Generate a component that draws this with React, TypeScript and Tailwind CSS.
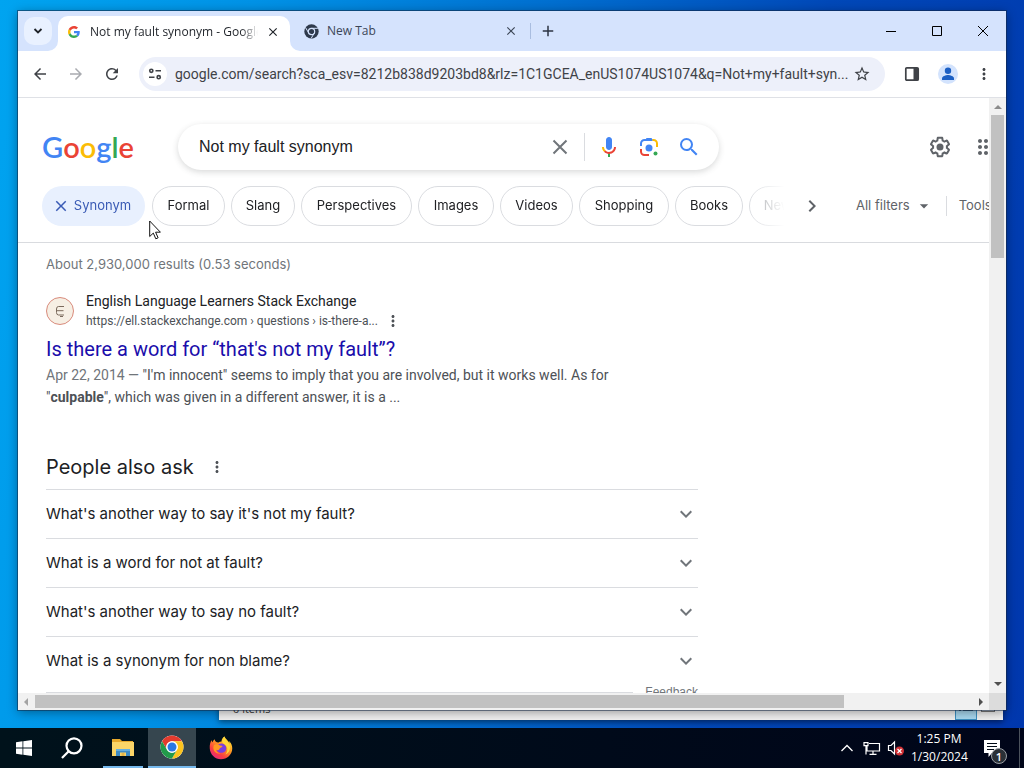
import React from "react";
import {
  MdArrowBack,
  MdArrowForward,
  MdRefresh,
  MdStarBorder,
  MdMoreVert,
  MdSearch,
  MdClose,
  MdAdd,
  MdKeyboardArrowDown,
  MdChevronRight,
  MdArrowDropDown,
} from "react-icons/md";

const chips = [
  { label: "Formal", width: "w-[73px]" },
  { label: "Slang", width: "w-16" },
  { label: "Perspectives", width: "w-[111px]" },
  { label: "Images", width: "w-[76px]" },
  { label: "Videos", width: "w-[73px]" },
  { label: "Shopping", width: "w-[90px]" },
  { label: "Books", width: "w-[68px]" },
];

const questions = [
  "What's another way to say it's not my fault?",
  "What is a word for not at fault?",
  "What's another way to say no fault?",
  "What is a synonym for non blame?",
];

function GoogleG() {
  return (
    <svg viewBox="0 0 48 48" className="size-3 shrink-0" aria-hidden="true">
      <path fill="#EA4335" d="M24 9.5c3.54 0 6.71 1.22 9.21 3.6l6.85-6.85C35.9 2.38 30.47 0 24 0 14.62 0 6.51 5.38 2.56 13.22l7.98 6.19C12.43 13.72 17.74 9.5 24 9.5z" />
      <path fill="#4285F4" d="M46.98 24.55c0-1.57-.15-3.09-.38-4.55H24v9.02h12.94c-.58 2.96-2.26 5.48-4.78 7.18l7.73 6c4.51-4.18 7.09-10.36 7.09-17.65z" />
      <path fill="#FBBC05" d="M10.53 28.59c-.48-1.45-.76-2.99-.76-4.59s.27-3.14.76-4.59l-7.98-6.19C.92 16.46 0 20.12 0 24s.92 7.54 2.56 10.78l7.97-6.19z" />
      <path fill="#34A853" d="M24 48c6.48 0 11.93-2.13 15.89-5.81l-7.73-6c-2.15 1.45-4.92 2.3-8.16 2.3-6.26 0-11.57-4.22-13.47-9.91l-7.98 6.19C6.51 42.62 14.62 48 24 48z" />
    </svg>
  );
}

function ChromeMono() {
  return (
    <svg viewBox="0 0 24 24" className="size-[15px] shrink-0" aria-hidden="true">
      <circle cx="12" cy="12" r="11.5" fill="#2f3a4c" />
      <circle cx="12" cy="12" r="5.1" fill="#2f3a4c" stroke="#d5e3fd" strokeWidth="1.9" />
      <path d="M12 6.9h10.2M7.6 14.5 2.5 5.8M16.4 14.5 11.3 23.3" stroke="#d5e3fd" strokeWidth="1.6" fill="none" />
    </svg>
  );
}

function ChromeColor() {
  return (
    <svg viewBox="0 0 48 48" className="size-6" aria-hidden="true">
      <circle cx="24" cy="24" r="23" fill="#fff" />
      <path fill="#e33b2e" d="M4.1 12.5A23 23 0 0 1 43.9 12.5H24A11.5 11.5 0 0 0 14 29.7z" />
      <path fill="#fcc31e" d="M43.9 12.5A23 23 0 0 1 24 47L34 29.7A11.5 11.5 0 0 0 24 12.5z" />
      <path fill="#229a4a" d="M24 47A23 23 0 0 1 4.1 12.5L14 29.7A11.5 11.5 0 0 0 34 29.7z" />
      <circle cx="24" cy="24" r="11.5" fill="#fff" />
      <circle cx="24" cy="24" r="9" fill="#2a78e4" />
    </svg>
  );
}

function Firefox() {
  return (
    <svg viewBox="0 0 48 48" className="size-6" aria-hidden="true">
      <defs>
        <linearGradient id="fox" x1="0.85" y1="0.05" x2="0.2" y2="0.95">
          <stop offset="0" stopColor="#ffe63b" />
          <stop offset="0.4" stopColor="#ff9a22" />
          <stop offset="0.75" stopColor="#fb3d43" />
          <stop offset="1" stopColor="#e42a7c" />
        </linearGradient>
      </defs>
      <path fill="url(#fox)" d="M45 17c-1.500-3.500-4-6-5.500-7 .8 1.600 1.300 3.500 1.400 4.800C38 8 32.500 6 31 1c-4 2-6 6-6 10-2.500.2-4.500 1-6 2-2 .2-4-.5-5-1.500-1.500-1-2.500-3-2.500-5C9 8 7.500 10.500 7 12.500 5.800 12 5.300 9.500 5.400 8 3 11.500 1 17 1.500 24.500 2 37 12 46.500 24 46.500S46.500 37 46.500 25c0-3-.4-5.500-1.500-8z" />
      <path fill="#7a3fe0" d="M16 20c3-5 10-7 15-3 4.500 3.500 5 10 1 14-5 4.500-13 3-16-2-2-3-1.500-6 0-9z" />
      <path fill="#ff9a22" d="M10 18c4-2 8-1.500 11 .5 2 1 4.500 1 6 1.500-.5 2-2.500 3-4.500 4-2 1-1.500 4-4 4.500-2 .5-3-.5-4-1 0 4 4 7 9 7-7 2-13-2-14.500-8-.6-3 0-6 1-8.500z" />
      <path fill="#ffd83a" d="M31 1c1 7 10 10 11 20 .8 8-4 14-9 16 4-5 5-11 2-16-2-4-6-5-8-8-1-4 0-9 4-12z" />
    </svg>
  );
}

function Explorer() {
  return (
    <svg viewBox="0 0 24 24" className="size-6" aria-hidden="true">
      <path d="M1 4h8l2 2h11v15H1z" fill="#e8a92c" />
      <path d="M1 7h22v14H1z" fill="#fbd568" />
      <path d="M5 14h14v7h-4v-3.500H9V21H5z" fill="#3f8cc4" />
      <path d="M5 14h14v2H5z" fill="#65afe0" />
      <path d="M10.500 18h3v3h-3z" fill="#e6b64a" />
    </svg>
  );
}

function Mic() {
  return (
    <svg viewBox="0 0 24 24" className="size-6" aria-hidden="true">
      <path fill="#4285f4" d="m12 15c1.660 0 3-1.310 3-2.970v-7.020c0-1.660-1.340-3.010-3-3.010s-3 1.340-3 3.010v7.020c0 1.660 1.340 2.970 3 2.970z" />
      <path fill="#34a853" d="m11 18.080h2v3.920h-2z" />
      <path fill="#fbbc04" d="m7.050 16.870c-1.270-1.330-2.050-2.830-2.050-4.870h2c0 1.450 0.560 2.420 1.470 3.380v0.320l-1.150 1.180z" />
      <path fill="#ea4335" d="m12 16.930a4.970 5.250 0 0 1 -3.540 -1.550l-1.410 1.490c1.260 1.340 3.020 2.130 4.950 2.130 3.870 0 6.990-2.920 6.990-7h-1.990c0 2.920-2.240 4.930-5 4.930z" />
    </svg>
  );
}

function Lens() {
  return (
    <svg viewBox="0 0 24 24" className="size-6" fill="none" aria-hidden="true">
      <path d="M4 11V8.500A3.500 3.500 0 0 1 7.500 5h8" stroke="#4285f4" strokeWidth="2" />
      <path d="M8 5.500 9.500 3h5L16 5.500z" fill="#4285f4" />
      <path d="M15.500 5h1A3.500 3.500 0 0 1 20 8.500V12" stroke="#fbbc04" strokeWidth="2" />
      <path d="M4 14v2.500A3.500 3.500 0 0 0 7.500 20H12" stroke="#ea4335" strokeWidth="2" />
      <circle cx="12" cy="13" r="3.500" fill="#4285f4" />
      <circle cx="18.500" cy="18.500" r="2" fill="#34a853" />
    </svg>
  );
}

function Gear() {
  return (
    <svg viewBox="0 0 24 24" className="size-6" fill="#5f6368" aria-hidden="true">
      <path d="M13.850 22.250h-3.700c-.740 0-1.360-.540-1.450-1.270l-.270-1.890c-.270-.140-.530-.290-.790-.460l-1.800.720c-.700.260-1.470-.030-1.810-.650L2.200 15.530c-.350-.660-.200-1.440.360-1.880l1.530-1.190c-.010-.150-.020-.300-.020-.460 0-.150.010-.310.020-.460l-1.520-1.190c-.590-.450-.740-1.260-.370-1.880l1.850-3.190c.340-.620 1.110-.900 1.790-.630l1.810.730c.260-.170.520-.320.780-.460l.270-1.910c.090-.700.710-1.250 1.440-1.250h3.700c.740 0 1.360.540 1.450 1.270l.270 1.890c.270.140.530.290.790.460l1.800-.720c.710-.260 1.480.030 1.820.650l1.840 3.180c.360.660.200 1.440-.360 1.880l-1.520 1.190c.010.150.020.300.020.460s-.010.310-.020.460l1.520 1.190c.560.450.720 1.230.370 1.860l-1.860 3.220c-.340.620-1.110.900-1.800.630l-1.800-.720c-.260.170-.520.320-.780.460l-.270 1.910c-.100.680-.720 1.220-1.460 1.220zm-3.230-2h2.760l.370-2.550.530-.220c.440-.180.880-.440 1.340-.780l.450-.340 2.380.960 1.380-2.400-2.030-1.580.070-.560c.030-.260.060-.510.060-.780s-.030-.530-.060-.780l-.070-.560 2.030-1.580-1.390-2.400-2.390.960-.450-.350c-.420-.320-.870-.580-1.330-.770l-.520-.220-.370-2.550h-2.760l-.370 2.550-.530.210c-.440.190-.880.440-1.340.790l-.450.330-2.380-.950-1.390 2.390 2.030 1.580-.070.560a7 7 0 0 0-.060.790c0 .260.020.530.060.780l.070.560-2.030 1.580 1.380 2.400 2.390-.960.450.350c.430.330.860.580 1.330.770l.530.220.380 2.550z" />
      <circle cx="12" cy="12" r="3.500" />
    </svg>
  );
}

function TabStrip() {
  return (
    <div className="flex h-10 shrink-0 bg-[#d5e3fd] text-xs text-[#1f2329]">
      <button aria-label="Search tabs" className="mt-1.5 ml-1.5 flex size-7 items-center justify-center rounded-[10px] bg-[#e9f1ff]">
        <svg viewBox="0 0 10 10" className="size-2.5" fill="none" stroke="#1f2329" strokeWidth="1.800" aria-hidden="true">
          <path d="M1.500 3 5 6.500 8.500 3" />
        </svg>
      </button>
      <div className="relative mt-[5px] ml-1.5 flex w-[232px] items-center rounded-t-[10px] bg-white pr-2 pb-1 pl-2.5">
        <svg viewBox="0 0 10 10" className="absolute bottom-0 -left-2.5 size-2.5" fill="#fff" aria-hidden="true">
          <path d="M10 0v10H0A10 10 0 0 0 10 0z" />
        </svg>
        <svg viewBox="0 0 10 10" className="absolute -right-2.5 bottom-0 size-2.5" fill="#fff" aria-hidden="true">
          <path d="M0 0v10h10A10 10 0 0 1 0 0z" />
        </svg>
        <GoogleG />
        <span className="ml-2.5 w-[168px] overflow-hidden mask-r-from-90% whitespace-nowrap">Not my fault synonym - Google Search</span>
        <button aria-label="Close tab" className="ml-2 text-sm"><MdClose /></button>
      </div>
      <div className="flex w-[238px] items-center pl-3.5 text-[#3c4657]">
        <ChromeMono />
        <span className="ml-2 flex-1">New Tab</span>
        <button aria-label="Close tab" className="mr-2.5 text-sm"><MdClose /></button>
      </div>
      <div className="my-3 ml-0.5 w-px bg-[#a9bde0]" />
      <button aria-label="New tab" className="ml-2 text-lg text-[#2c3543]"><MdAdd /></button>
      <div className="ml-auto flex">
        <button aria-label="Minimize" className="flex w-[46px] items-center justify-center">
          <svg viewBox="0 0 10 10" className="size-2.5" stroke="#000" aria-hidden="true"><path d="M0 5.500h10" /></svg>
        </button>
        <button aria-label="Maximize" className="flex w-[46px] items-center justify-center">
          <svg viewBox="0 0 10 10" className="size-2.5" stroke="#000" fill="none" aria-hidden="true"><path d="M.5.500h9v9h-9z" /></svg>
        </button>
        <button aria-label="Close" className="flex w-[46px] items-center justify-center">
          <svg viewBox="0 0 10 10" className="size-2.5" stroke="#000" aria-hidden="true"><path d="M0 0l10 10M10 0 0 10" /></svg>
        </button>
      </div>
    </div>
  );
}

function Toolbar() {
  return (
    <div className="flex h-[47px] shrink-0 items-center border-b border-[#dfe1e6] pr-[13px] pl-[13px] text-[#3f4247]">
      <button aria-label="Back" className="text-lg"><MdArrowBack /></button>
      <button aria-label="Forward" className="ml-[18px] text-lg text-[#a9abb0]"><MdArrowForward /></button>
      <button aria-label="Reload" className="ml-[18px] text-lg"><MdRefresh /></button>
      <div className="ml-[18px] flex h-[34px] min-w-0 flex-1 items-center rounded-full bg-[#edf0fa] pr-3.5 pl-1">
        <button aria-label="View site information" className="flex size-6 shrink-0 items-center justify-center rounded-full bg-white">
          <svg viewBox="0 0 14 14" className="size-3.5" fill="none" stroke="#3f4247" strokeWidth="1.600" aria-hidden="true">
            <circle cx="3.300" cy="3.800" r="1.600" />
            <path d="M7.500 3.800H13M1 10.200h5.500" />
            <circle cx="10.700" cy="10.200" r="1.600" />
          </svg>
        </button>
        <input
          aria-label="Address and search bar"
          readOnly
          value="google.com/search?sca_esv=8212b838d9203bd8&rlz=1C1GCEA_enUS1074US1074&q=Not+my+fault+syn..."
          className="ml-2 min-w-0 flex-1 bg-transparent font-['Roboto'] text-sm outline-none"
        />
        <button aria-label="Bookmark this tab" className="ml-1 text-lg"><MdStarBorder /></button>
      </div>
      <button aria-label="Side panel" className="ml-[19px]">
        <svg viewBox="0 0 16 16" className="size-4" fill="none" aria-hidden="true">
          <rect x="1.800" y="1.800" width="12.400" height="12.400" rx="1" stroke="#3f4247" strokeWidth="1.700" />
          <path d="M9.500 2H14v12H9.500z" fill="#3f4247" />
        </svg>
      </button>
      <button aria-label="Profile" className="ml-[18px] flex size-5 items-center justify-center rounded-full bg-[#d3e3fd]">
        <svg viewBox="0 0 20 20" className="size-5" fill="#1b5fc4" aria-hidden="true">
          <circle cx="10" cy="6.800" r="3.200" />
          <path d="M4 16v-1.500c0-2.200 4-3.400 6-3.400s6 1.200 6 3.400V16z" />
        </svg>
      </button>
      <button aria-label="Menu" className="ml-[17px] text-lg"><MdMoreVert /></button>
    </div>
  );
}

function SearchHeader() {
  return (
    <header className="border-b border-[#d9dbdf]">
      <div className="flex items-center pt-[26px] pl-6">
        <a href="#home" aria-label="Google" className="flex h-10 w-[136px] items-center font-['Lato'] text-[29px] leading-10 font-semibold">
          <span className="text-[#4285f4]">G</span>
          <span className="text-[#ea4335]">o</span>
          <span className="text-[#fbbc05]">o</span>
          <span className="text-[#4285f4]">g</span>
          <span className="text-[#34a853]">l</span>
          <span className="text-[#ea4335]">e</span>
        </a>
        <div className="flex h-[46px] w-[541px] items-center rounded-full bg-white pr-[18px] pl-[21px] shadow-[0_2px_6px_rgba(60,64,67,0.2)]">
          <input aria-label="Search" defaultValue="Not my fault synonym" className="min-w-0 flex-1 bg-transparent font-['Liberation_Sans'] text-base text-[#202124] outline-none" />
          <button aria-label="Clear" className="text-[#70757a]">
            <svg viewBox="0 0 24 24" className="size-6" stroke="currentColor" strokeWidth="2" aria-hidden="true"><path d="m5.500 5.500 13 13M18.500 5.500l-13 13" /></svg>
          </button>
          <div className="mx-3 h-7 w-px bg-[#dadce0]" />
          <button aria-label="Search by voice"><Mic /></button>
          <button aria-label="Search by image" className="ml-4"><Lens /></button>
          <button aria-label="Submit search" className="ml-4 text-2xl text-[#4285f4]"><MdSearch /></button>
        </div>
        <button aria-label="Settings" className="ml-[209px]"><Gear /></button>
        <button aria-label="Google apps" className="ml-[22px]">
          <svg viewBox="0 0 24 24" className="size-6" fill="#5f6368" aria-hidden="true">
            <path d="M6 8c1.100 0 2-.9 2-2s-.9-2-2-2-2 .9-2 2 .9 2 2 2zm6 12c1.100 0 2-.9 2-2s-.9-2-2-2-2 .9-2 2 .9 2 2 2zm-6 0c1.100 0 2-.9 2-2s-.9-2-2-2-2 .9-2 2 .9 2 2 2zm0-6c1.100 0 2-.9 2-2s-.9-2-2-2-2 .9-2 2 .9 2 2 2zm6 0c1.100 0 2-.9 2-2s-.9-2-2-2-2 .9-2 2 .9 2 2 2zm4-8c0 1.100.9 2 2 2s2-.9 2-2-.9-2-2-2-2 .9-2 2zm-4 2c1.100 0 2-.9 2-2s-.9-2-2-2-2 .9-2 2 .9 2 2 2zm6 6c1.100 0 2-.9 2-2s-.9-2-2-2-2 .9-2 2 .9 2 2 2zm0 6c1.100 0 2-.9 2-2s-.9-2-2-2-2 .9-2 2 .9 2 2 2z" />
          </svg>
        </button>
      </div>
      <div className="flex items-center pt-4 pb-4 pl-6 font-['Inter'] text-[13px] text-[#202124]">
        <div className="flex w-[750px] gap-1.5 overflow-hidden mask-r-from-94% mask-r-to-99%">
          <button className="mr-px flex h-10 w-[103px] shrink-0 items-center justify-center gap-1 rounded-full bg-[#e8f0fe] pr-1 text-[#3a5bb5]">
            <MdClose className="text-lg" />
            Synonym
          </button>
          {chips.map((c) => (
            <button key={c.label} className={`h-10 shrink-0 rounded-full border border-[#dadce0] ${c.width}`}>
              {c.label}
            </button>
          ))}
          <button className="h-10 w-16 shrink-0 rounded-full border border-[#dadce0] text-[#9a9da1]">News</button>
        </div>
        <button aria-label="Next" className="ml-2 text-2xl text-[#5f6368]"><MdChevronRight /></button>
        <button className="ml-8 flex items-center gap-1 text-[#5f6368]">
          All filters <MdArrowDropDown className="text-xl" />
        </button>
        <div className="ml-3 h-5 w-px bg-[#dadce0]" />
        <button className="ml-3 text-[#5f6368]">Tools</button>
      </div>
    </header>
  );
}

function Results() {
  return (
    <main className="w-[680px] pl-7">
      <p className="mt-[11px] font-['Inter'] text-[13px] leading-5 text-[#70757a]">About 2,930,000 results (0.53 seconds)</p>
      <article className="mt-[17px] font-['Roboto']">
        <div className="flex items-center gap-3">
          <div className="flex size-7 items-center justify-center rounded-full border border-[#d98b7c] bg-[#f6efe4]">
            <svg viewBox="0 0 12 14" className="h-3.5 w-3" fill="none" stroke="#7a6a5c" strokeWidth="1" aria-hidden="true">
              <path d="M10 2.500H4.500Q2.500 2.500 2.500 5v3.500q0 2.500 2 2.500H10M3 6.700h6.500M6 12.500h3" />
            </svg>
          </div>
          <div>
            <div className="text-sm leading-5 text-[#202124]">English Language Learners Stack Exchange</div>
            <div className="flex items-center text-xs leading-5 text-[#4d5156]">
              https://ell.stackexchange.com › questions › is-there-a...
              <button aria-label="About this result" className="ml-1.5 text-lg"><MdMoreVert /></button>
            </div>
          </div>
        </div>
        <h3 className="mt-1 text-xl leading-7 text-[#1a0dab]">
          <a href="#result">Is there a word for “that's not my fault”?</a>
        </h3>
        <p className="mt-px text-sm leading-[22px] text-[#4d5156]">
          <span className="text-[#70757a]">Apr 22, 2014 — </span>"I'm innocent" seems to imply that you are involved, but it works well. As for
          <br />"<b>culpable</b>", which was given in a different answer, it is a ...
        </p>
      </article>
      <section className="font-['Inter'] text-[#202124]">
        <div className="mt-[45px] flex items-center gap-3.5">
          <h2 className="text-xl leading-7">People also ask</h2>
          <button aria-label="About these results" className="text-lg text-[#4d5156]"><MdMoreVert /></button>
        </div>
        <div className="mt-2">
          {questions.map((q) => (
            <button key={q} className="flex h-[49px] w-full items-center justify-between border-t border-[#dadce0] text-[15px]">
              {q}
              <MdKeyboardArrowDown className="text-2xl text-[#70757a]" />
            </button>
          ))}
        </div>
        <div className="flex pt-px">
          <div className="mt-1.5 mr-3 flex-1 border-t border-[#dadce0]" />
          <a href="#feedback" className="font-['Liberation_Sans'] text-xs leading-3 text-[#70757a]">Feedback</a>
        </div>
      </section>
    </main>
  );
}

function Browser() {
  return (
    <section className="absolute inset-x-[18px] top-[11px] bottom-[18px] flex flex-col bg-white font-['Open_Sans'] shadow-[0_0_0_1px_rgba(20,40,70,0.55),0_2px_10px_rgba(0,0,0,0.4)]">
      <TabStrip />
      <Toolbar />
      <div className="flex min-h-0 flex-1">
        <div className="min-w-0 flex-1 overflow-hidden">
          <div className="min-w-[1127px]">
            <SearchHeader />
            <Results />
          </div>
        </div>
        <div className="flex w-[17px] flex-col items-center bg-[#f1f1f1] py-[7px]">
          <svg viewBox="0 0 8 4" className="h-1 w-2 shrink-0" fill="#8b8b8b" aria-hidden="true"><path d="M0 4h8L4 0z" /></svg>
          <div className="mt-1.5 h-[143px] w-[13px] bg-[#c1c1c1]" />
          <svg viewBox="0 0 8 4" className="mt-auto h-1 w-2 shrink-0" fill="#505050" aria-hidden="true"><path d="M0 0h8L4 4z" /></svg>
        </div>
      </div>
      <div className="flex h-[17px] shrink-0 items-center bg-[#f1f1f1]">
        <svg viewBox="0 0 4 8" className="ml-1.5 h-2 w-1" fill="#a3a3a3" aria-hidden="true"><path d="M4 0v8L0 4z" /></svg>
        <div className="ml-[7px] flex-1"><div className="h-[13px] w-6/7 bg-[#c1c1c1]" /></div>
        <svg viewBox="0 0 4 8" className="mr-[6px] h-2 w-1" fill="#505050" aria-hidden="true"><path d="M0 0v8l4-4z" /></svg>
        <div className="h-full w-[17px] bg-[#dcdcdc]" />
      </div>
    </section>
  );
}

function Taskbar() {
  return (
    <footer className="flex h-10 shrink-0 items-stretch bg-linear-to-r from-[#00121b] to-[#000519] font-['Open_Sans'] text-xs text-white">
      <button aria-label="Start" className="flex w-12 items-center justify-center">
        <svg viewBox="0 0 16 16" className="size-4" fill="#fff" aria-hidden="true">
          <path d="M0 2.200 6.500 1.300v6.300H0zM7.300 1.200 16 0v7.600H7.300zM0 8.400h6.500v6.300L0 13.800zM7.300 8.400H16V16l-8.700-1.200z" />
        </svg>
      </button>
      <button aria-label="Search" className="flex w-12 items-center justify-center">
        <svg viewBox="0 0 22 22" className="size-[22px]" fill="none" stroke="#fff" strokeWidth="2.200" aria-hidden="true">
          <circle cx="13" cy="8.800" r="7.500" />
          <path d="M7.700 14.200 1 21" />
        </svg>
      </button>
      <button aria-label="File Explorer" className="ml-[7px] flex w-10 items-center justify-center border-b-2 border-[#76b9ed]"><Explorer /></button>
      <button aria-label="Google Chrome" className="ml-[5px] flex w-12 items-center justify-center border-b-2 border-[#76b9ed] bg-[#36464f]"><ChromeColor /></button>
      <button aria-label="Firefox" className="ml-px flex w-12 items-center justify-center"><Firefox /></button>
      <div className="ml-auto flex items-center">
        <button aria-label="Show hidden icons">
          <svg viewBox="0 0 12 8" className="h-2 w-3" fill="none" stroke="#fff" strokeWidth="1.300" aria-hidden="true"><path d="m.5 7 5.500-5.500L11.500 7" /></svg>
        </button>
        <svg viewBox="0 0 18 16" className="ml-2.5 h-4 w-[18px]" fill="none" stroke="#fff" strokeWidth="1.200" role="img" aria-label="Network">
          <path d="M6 3.500h10.500v7.500H4V6M10 11v3M6.500 14.400h7M1 2.600h4v3H1zM3 6v8.500" />
        </svg>
        <svg viewBox="0 0 18 16" className="ml-1.5 h-4 w-[18px]" fill="none" stroke="#fff" strokeWidth="1.200" role="img" aria-label="Muted">
          <path d="M1.500 5.500H4L7.500 2v12L4 10.500H1.500z" />
          <circle cx="12.500" cy="11" r="4.500" fill="#cf3034" stroke="none" />
          <path d="m10.500 9 4 4M14.500 9l-4 4" />
        </svg>
        <div className="ml-1.5 w-14 text-center leading-[18px] whitespace-nowrap">
          <div>1:25 PM</div>
          <div>1/30/2024</div>
        </div>
        <button aria-label="Notifications" className="relative ml-4 flex h-10 w-6 items-center">
          <svg viewBox="0 0 18 18" className="size-[18px]" aria-hidden="true">
            <path d="M1 1h16v13H9l-3.500 4v-4H1z" fill="#fff" />
            <path d="M4 4.500h10M4 7.500h10M4 10.500h7" stroke="#000a16" strokeWidth="1.200" />
          </svg>
          <span className="absolute right-0 bottom-1 flex size-4 items-center justify-center rounded-full border border-[#9a9fa5] bg-[#2a3037] text-[11px] leading-none font-semibold">1</span>
        </button>
        <div className="ml-3 h-10 w-px bg-[#4b525c]" />
        <div className="w-1" />
      </div>
    </footer>
  );
}

export default function App() {
  return (
    <div className="flex h-screen flex-col overflow-hidden">
      <div className="relative min-h-0 flex-1 overflow-hidden bg-[linear-gradient(100deg,#00a4f0_0%,#0092e6_22%,#006fd0_48%,#0048b8_72%,#0037ad_100%)]">
        <section className="absolute right-[21px] bottom-2 left-[219px] flex h-16 items-end justify-between bg-[#f0f0f0] px-3.5 font-['Open_Sans'] text-[11px] leading-4 text-[#333] shadow-[0_2px_6px_rgba(0,0,0,0.5)]">
          <span className="mb-[3px]">0 items</span>
          <div className="-mr-1.5 flex items-start gap-1">
            <span className="flex h-5 w-[22px] items-center justify-center border border-[#3c8fc0] bg-[#a8d8f0]">
              <svg viewBox="0 0 14 8" className="h-2 w-3.5" stroke="#35607a" aria-hidden="true"><path d="M0 1.500h2M4 1.500h10M0 4.500h2M4 4.500h10" /></svg>
            </span>
            <span className="h-3 w-3.5 border border-[#777] bg-white" />
          </div>
        </section>
        <Browser />
        <svg viewBox="0 0 12 20" className="absolute top-[220px] left-[149px] h-5 w-3" fill="#fff" stroke="#111" strokeWidth="1" aria-hidden="true">
          <path d="M.7 1v15.500l3.600-3.400 2.500 5.700 2.300-1-2.500-5.600h4.800z" />
        </svg>
      </div>
      <Taskbar />
    </div>
  );
}
